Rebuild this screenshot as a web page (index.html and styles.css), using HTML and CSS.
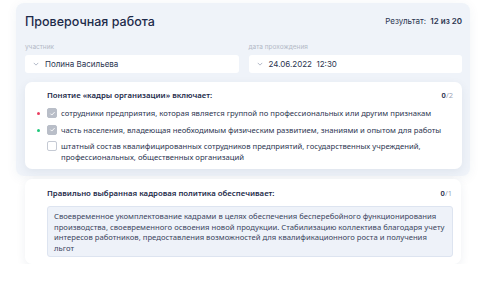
FILE: index.html
```html
<!DOCTYPE html>
<html lang="ru">
<head>
    <meta charset="UTF-8">
    <title>Проверочная работа</title>
    <link rel="stylesheet" href="styles.css">
</head>
<body>
    <div class="test">
        <div class="test-head">
            <h1 class="test-title">Проверочная работа</h1>
            <div class="result">Результат: <b>12 из 20</b></div>
        </div>
        <div class="fields">
            <div class="field">
                <div class="field-label">участник</div>
                <div class="field-box">
                    <svg class="chevron" viewBox="0 0 8 5" width="6" height="4"><path d="M1 1l3 3 3-3" fill="none" stroke="#9aa3b5" stroke-width="1"/></svg>
                    Полина Васильева
                </div>
            </div>
            <div class="field">
                <div class="field-label">дата прохождения</div>
                <div class="field-box">
                    <svg class="chevron" viewBox="0 0 8 5" width="6" height="4"><path d="M1 1l3 3 3-3" fill="none" stroke="#9aa3b5" stroke-width="1"/></svg>
                    24.06.2022&nbsp;&nbsp;12:30
                </div>
            </div>
        </div>
        <div class="card">
            <div class="card-head">
                <div class="question">Понятие «кадры организации» включает:</div>
                <div class="score"><b>0</b>/2</div>
            </div>
            <div class="option">
                <span class="dot wrong"></span>
                <span class="check checked"><svg viewBox="0 0 10 10" width="7" height="7"><path d="M2 5.2l2 2 4-4.2" fill="none" stroke="#fff" stroke-width="1.3"/></svg></span>
                <span class="option-text">сотрудники предприятия, которая является группой по профессиональных или другим признакам</span>
            </div>
            <div class="option">
                <span class="dot right"></span>
                <span class="check checked"><svg viewBox="0 0 10 10" width="7" height="7"><path d="M2 5.2l2 2 4-4.2" fill="none" stroke="#fff" stroke-width="1.3"/></svg></span>
                <span class="option-text">часть населения, владеющая необходимым физическим развитием, знаниями и опытом для работы</span>
            </div>
            <div class="option">
                <span class="dot"></span>
                <span class="check"></span>
                <span class="option-text">штатный состав квалифицированных сотрудников предприятий, государственных учреждений,<br>профессиональных, общественных организаций</span>
            </div>
        </div>
    </div>
    <div class="card card-single">
        <div class="card-head">
            <div class="question">Правильно выбранная кадровая политика обеспечивает:</div>
            <div class="score"><b>0</b>/1</div>
        </div>
        <div class="answer">Своевременное укомплектование кадрами в целях обеспечения бесперебойного функционирования производства, своевременного освоения новой продукции. Стабилизацию коллектива благодаря учету интересов работников, предоставления возможностей для квалификационного роста и получения<br>льгот</div>
    </div>
</body>
</html>
```

FILE: styles.css
```css
body {
    margin: 0;
    padding: 3px 17px 0 16px;
    background: #fff;
    font-family: 'Noto Sans', sans-serif;
    color: #2b3550;
}

.test {
    background: #eff3f9;
    border-radius: 8px;
    padding: 8px 8px 7px 9px;
    box-shadow: 0 2px 12px rgba(40, 60, 100, 0.06);
}

.test-head {
    display: flex;
    justify-content: space-between;
    align-items: center;
    height: 20px;
}

.test-title {
    margin: 0;
    font-family: 'Inter', sans-serif;
    font-size: 12.5px;
    font-weight: 500;
    color: #1d2a4a;
}

.result {
    font-family: 'Inter', sans-serif;
    font-size: 8px;
    color: #2b3550;
}

.result b {
    font-weight: 600;
    margin-left: 2px;
}

.fields {
    display: grid;
    grid-template-columns: 1fr 1fr;
    gap: 10px;
    margin-top: 12px;
}

.field-label {
    font-family: 'Inter', sans-serif;
    font-size: 6.5px;
    line-height: 8px;
    color: #b3b9c6;
    margin-bottom: 4px;
}

.field-box {
    display: flex;
    align-items: center;
    gap: 6px;
    height: 18px;
    padding-left: 8px;
    background: #fff;
    border-radius: 3px;
    font-family: 'Inter', sans-serif;
    font-size: 8px;
    color: #2b3550;
}

.card {
    background: #fff;
    border-radius: 7px;
    padding: 8px 8px 7px 22px;
    margin-top: 9px;
    box-shadow: 0 3px 10px rgba(40, 60, 100, 0.08);
}

.card-single {
    margin: 3px 9px 0 9px;
    padding-top: 9px;
    padding-bottom: 7px;
}

.card-head {
    display: flex;
    justify-content: space-between;
    align-items: center;
    line-height: 11px;
    margin-bottom: 7px;
}

.question {
    font-size: 7.8px;
    font-weight: 600;
    color: #1d2a4a;
}

.score {
    font-size: 7.5px;
    color: #9aa3b5;
    margin-right: 1px;
}

.score b {
    color: #1d2a4a;
    font-weight: 600;
}

.option {
    display: flex;
    align-items: flex-start;
    position: relative;
    margin-bottom: 6px;
}

.option:last-child {
    margin-bottom: 0;
}

.dot {
    position: absolute;
    left: -10px;
    top: 4px;
    width: 3px;
    height: 3px;
    border-radius: 50%;
}

.dot.wrong {
    background: #ea3f62;
}

.dot.right {
    background: #1fc77a;
}

.check {
    flex: none;
    width: 8px;
    height: 8px;
    border: 1px solid #c5cad4;
    border-radius: 2px;
    margin-right: 4px;
    display: flex;
    align-items: center;
    justify-content: center;
    background: #fff;
}

.check.checked {
    background: #b9bec8;
    border-color: #b9bec8;
}

.option-text {
    font-size: 7.7px;
    line-height: 10.5px;
    color: #2b3550;
}

.answer {
    background: #eef2f9;
    border: 1px solid #dde4f0;
    border-radius: 3px;
    padding: 4px 3px 3px 6px;
    font-size: 7.7px;
    line-height: 10.6px;
    color: #3a4560;
}
```
